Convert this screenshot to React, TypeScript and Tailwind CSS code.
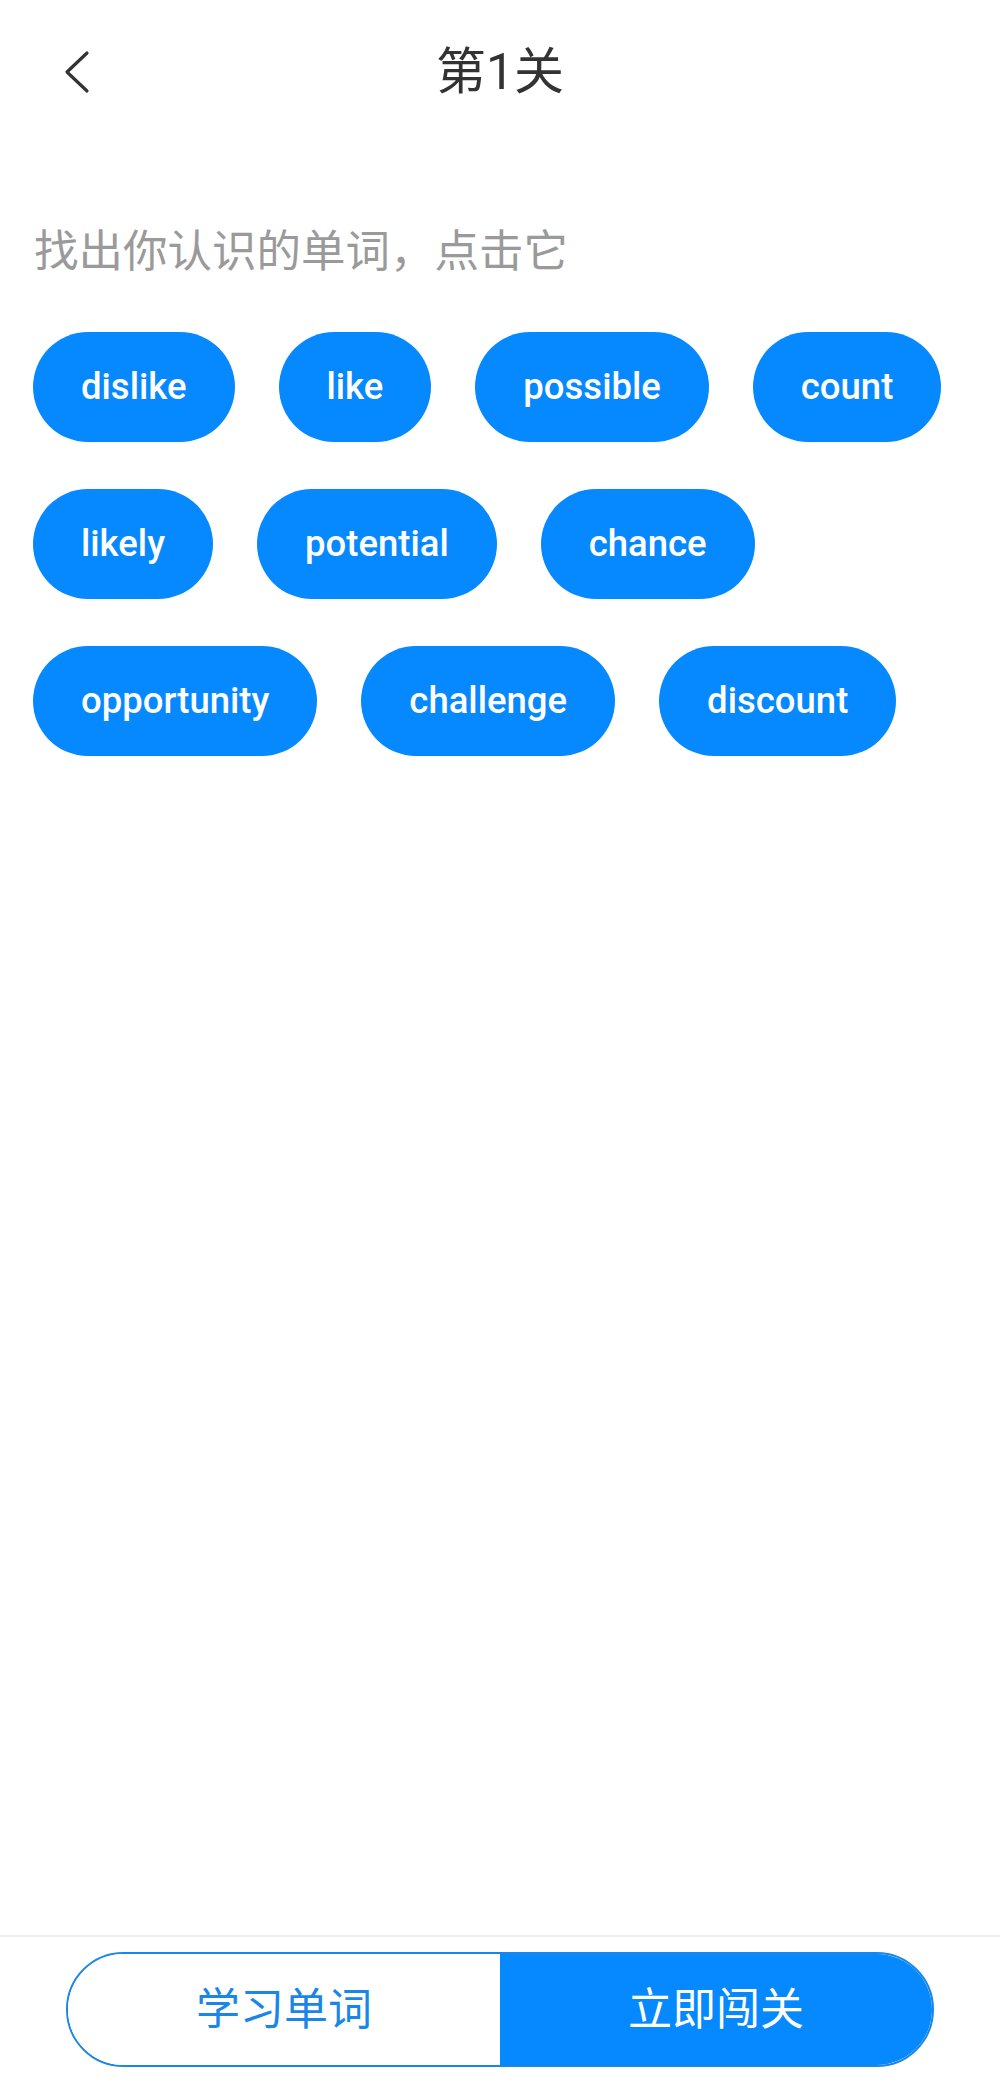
import React from 'react';

const words = [
  'dislike',
  'like',
  'possible',
  'count',
  'likely',
  'potential',
  'chance',
  'opportunity',
  'challenge',
  'discount',
];

const cjk = { fontFamily: 'Roboto, "Noto Sans CJK SC", sans-serif' };

function BackIcon() {
  return (
    <svg width="40" height="50" viewBox="0 0 40 50" fill="none">
      <path d="M30 6 L10 25 L30 44" stroke="#333333" strokeWidth="3.2" strokeLinecap="round" strokeLinejoin="round" />
    </svg>
  );
}

export default function App() {
  return (
    <div className="w-full h-[2082px] flex flex-col bg-white" style={cjk}>
      {/* Header */}
      <header className="h-[140px] pt-[4px] flex items-center px-[57px]">
        <button className="w-[60px] flex items-center">
          <BackIcon />
        </button>
        <h1 className="flex-1 text-center text-[50px] leading-none text-[#333333]">第1关</h1>
        <div className="w-[60px]" />
      </header>

      {/* Tip */}
      <p className="mt-[86px] pl-[34px] text-[44.5px] leading-[53px] text-[#9a9a9a]">找出你认识的单词，点击它</p>

      {/* Words */}
      <div className="mt-[53px] px-[33px] flex flex-wrap gap-x-[44px] gap-y-[47px]">
        {words.map(w => (
          <button
            key={w}
            className="h-[110px] px-[48px] rounded-full bg-[#0689fe] text-white text-[36.5px] font-medium flex items-center justify-center"
          >
            {w}
          </button>
        ))}
      </div>

      <div className="flex-1" />

      {/* Bottom bar */}
      <footer className="border-t-2 border-[#eeeeee] pt-[15px] pb-[15px] px-[66px]">
        <div className="h-[115px] flex rounded-full border-2 border-[#1a86e8] overflow-hidden">
          <button className="flex-1 bg-white text-[#1a86e8] text-[44px] flex items-center justify-center">学习单词</button>
          <button className="flex-1 bg-[#0689fe] text-white text-[44px] flex items-center justify-center">立即闯关</button>
        </div>
      </footer>
    </div>
  );
}
